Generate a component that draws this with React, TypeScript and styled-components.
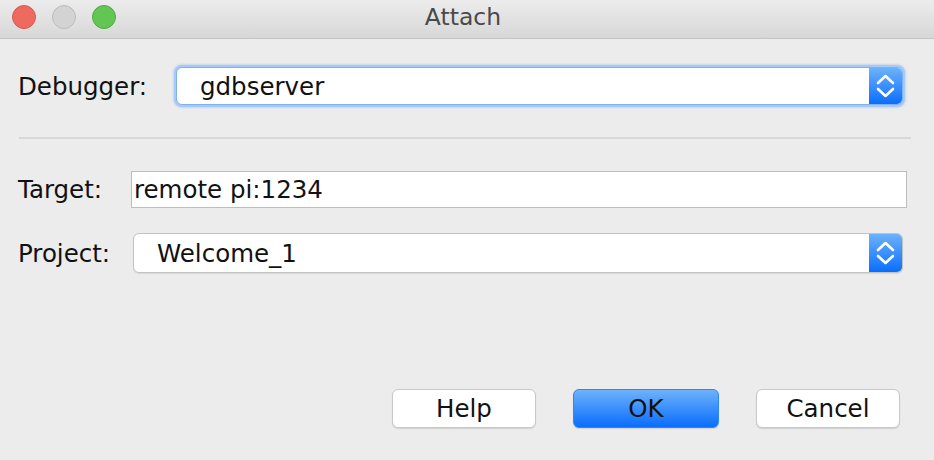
import React from "react";
import styled, { createGlobalStyle, css } from "styled-components";

const GlobalStyle = createGlobalStyle`
  html, body { margin: 0; padding: 0; background: #ececec; }
  body { font-family: "DejaVu Sans", "Liberation Sans", sans-serif; }
  * { box-sizing: border-box; }
`;

const Window = styled.div`
  width: 934px;
  height: 460px;
  background: #ececec;
  display: flex;
  flex-direction: column;
  overflow: hidden;
  color: #111;
`;

const TitleBar = styled.div`
  height: 39px;
  flex: none;
  display: grid;
  grid-template-columns: 1fr auto 1fr;
  align-items: center;
  background: linear-gradient(#ececec, #d7d7d7);
  border-bottom: 1px solid #c4c4c4;
  padding: 0 20px 0 12px;
`;

const Lights = styled.div`
  display: flex;
  gap: 16px;
  align-items: center;
  margin-top: -4px;
`;

const Light = styled.span<{ $color: string; $border: string }>`
  width: 24px;
  height: 24px;
  border-radius: 50%;
  background: ${(p) => p.$color};
  border: 1px solid ${(p) => p.$border};
`;

const Title = styled.div`
  font-size: 23.5px;
  color: #4a4a4a;
  margin-top: -4px;
`;

const Body = styled.div`
  flex: 1;
  display: flex;
  flex-direction: column;
`;

const FieldRow = styled.div<{ $label: number; $top: number; $right: number; $height: number }>`
  display: grid;
  grid-template-columns: ${(p) => p.$label}px 1fr;
  align-items: center;
  height: ${(p) => p.$height}px;
  margin-top: ${(p) => p.$top}px;
  padding-left: 18px;
  padding-right: ${(p) => p.$right}px;
`;

const Label = styled.label`
  font-size: 24.5px;
  color: #111;
`;

const Combo = styled.div<{ $focused?: boolean; $h: number }>`
  height: ${(p) => p.$h}px;
  display: flex;
  align-items: stretch;
  background: #fff;
  border-radius: 6px;
  border: 1px solid #c2c2c2;
  box-shadow: 0 1px 1px rgba(0, 0, 0, 0.08);
  overflow: hidden;
  ${(p) =>
    p.$focused &&
    css`
      border-color: #7fb0ef;
      box-shadow: 0 0 0 2px #a6c9f5, 0 0 2px 3px rgba(120, 170, 240, 0.35);
    `}
`;

const ComboText = styled.div`
  flex: 1;
  font-size: 24.5px;
  padding-left: 23px;
  display: flex;
  align-items: center;
  color: #111;
`;

const ComboArrow = styled.div`
  width: 33px;
  flex: none;
  background: linear-gradient(#6cb2fb, #0a6efd);
  display: flex;
  align-items: center;
  justify-content: center;
`;

const Separator = styled.div`
  height: 2px;
  background: #d8d8d8;
  margin: 32px 23px 0 19px;
`;

const TextField = styled.div`
  height: 37px;
  background: #fff;
  border: 1px solid #bdbdbd;
  font-size: 24.5px;
  padding-left: 2px;
  display: flex;
  align-items: center;
  color: #111;
`;

const ButtonRow = styled.div`
  display: flex;
  justify-content: flex-end;
  gap: 37px;
  margin-top: 116px;
  padding-right: 34px;
`;

const Button = styled.button<{ $primary?: boolean; $w: number }>`
  width: ${(p) => p.$w}px;
  height: 39px;
  border-radius: 6px;
  font-family: inherit;
  font-size: 24.5px;
  color: #111;
  padding: 0;
  background: #fff;
  border: 1px solid #c8c8c8;
  box-shadow: 0 1px 1px rgba(0, 0, 0, 0.12);
  ${(p) =>
    p.$primary &&
    css`
      background: linear-gradient(#6db2fb, #0a6dfd);
      border-color: #2f86f5;
    `}
`;

const Chevrons = () => (
  <svg width="33" height="38" viewBox="0 0 33 38">
    <path d="M9 16 L16.5 9 L24 16" stroke="#fff" strokeWidth="2.6" fill="none" strokeLinecap="round" strokeLinejoin="round" />
    <path d="M9 22 L16.5 29 L24 22" stroke="#fff" strokeWidth="2.6" fill="none" strokeLinecap="round" strokeLinejoin="round" />
  </svg>
);

export default function App() {
  return (
    <>
      <GlobalStyle />
      <Window>
        <TitleBar>
          <Lights>
            <Light $color="#ee6a5f" $border="#d65a50" />
            <Light $color="#d3d3d3" $border="#bcbcbc" />
            <Light $color="#62c554" $border="#4eac40" />
          </Lights>
          <Title>Attach</Title>
          <div />
        </TitleBar>
        <Body>
          <FieldRow $label={158} $top={28} $right={31} $height={38}>
            <Label>Debugger:</Label>
            <Combo $focused $h={38}>
              <ComboText>gdbserver</ComboText>
              <ComboArrow>
                <Chevrons />
              </ComboArrow>
            </Combo>
          </FieldRow>
          <Separator />
          <FieldRow $label={113} $top={32} $right={27} $height={37}>
            <Label>Target:</Label>
            <TextField>remote pi:1234</TextField>
          </FieldRow>
          <FieldRow $label={115} $top={25} $right={31} $height={40}>
            <Label>Project:</Label>
            <Combo $h={40}>
              <ComboText>Welcome_1</ComboText>
              <ComboArrow>
                <Chevrons />
              </ComboArrow>
            </Combo>
          </FieldRow>
          <ButtonRow>
            <Button $w={144}>Help</Button>
            <Button $w={146} $primary>
              OK
            </Button>
            <Button $w={144}>Cancel</Button>
          </ButtonRow>
        </Body>
      </Window>
    </>
  );
}
